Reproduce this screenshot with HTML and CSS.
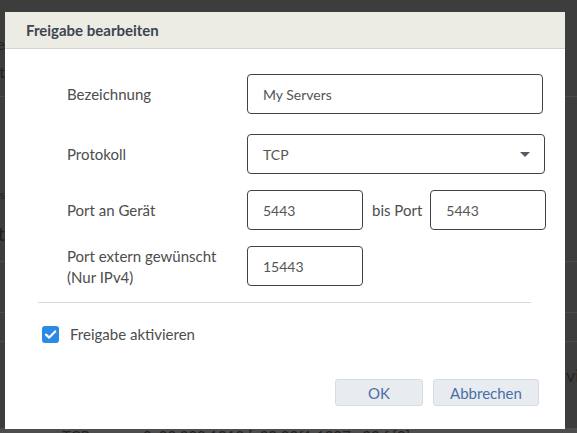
FILE: index.html
```html
<!DOCTYPE html>
<html lang="de">
<head>
<meta charset="utf-8">
<title>Freigabe bearbeiten</title>
<link rel="stylesheet" href="styles.css">
</head>
<body>
<div class="page">
  <div class="bg-row r1"><span class="bg-l t1">Liste</span><span class="bg-l t2">Endgerät</span></div>
  <div class="bg-row r2"><span class="bg-l t3">Adresses</span><span class="bg-l t4">Port</span></div>
  <div class="bg-row r3"></div>
  <div class="bg-row r4"></div>
  <div class="bg-row r5"><span class="bg-r">vi</span></div>
  <div class="bg-row r6"><span class="bg-b">TCP</span><span class="bg-b2">0..00.000.1010 [..00:00f1:1007 &nbsp; 00 f [0]</span></div>
</div>

<div class="dialog">
  <div class="dialog-header">Freigabe bearbeiten</div>
  <div class="dialog-body">
    <div class="form">
      <div class="row row-1">
        <label class="label">Bezeichnung</label>
        <div class="field wide">My Servers</div>
      </div>
      <div class="row row-2">
        <label class="label">Protokoll</label>
        <div class="field select">TCP<span class="caret"></span></div>
      </div>
      <div class="row row-3">
        <label class="label">Port an Gerät</label>
        <div class="field short">5443</div>
        <span class="bis">bis Port</span>
        <div class="field short">5443</div>
      </div>
      <div class="row row-4">
        <label class="label two">Port extern gewünscht<br>(Nur IPv4)</label>
        <div class="field short">15443</div>
      </div>
    </div>
    <div class="divider"></div>
    <div class="check-row">
      <span class="checkbox">
        <svg width="17" height="17" viewBox="0 0 17 17"><path d="M4 8.6 L7.2 11.6 L13.2 5.4" fill="none" stroke="#fff" stroke-width="2.2" stroke-linecap="round" stroke-linejoin="round"/></svg>
      </span>
      <span class="check-label">Freigabe aktivieren</span>
    </div>
    <div class="buttons">
      <button class="btn ok">OK</button>
      <button class="btn cancel">Abbrechen</button>
    </div>
  </div>
</div>
</body>
</html>
```

FILE: styles.css
```css
html, body {
  margin: 0;
  padding: 0;
}
body {
  width: 577px;
  height: 433px;
  overflow: hidden;
  background: #3d3d3d;
  font-family: "Lato", "Liberation Sans", sans-serif;
  position: relative;
}

/* page behind the modal */
.page {
  display: flex;
  flex-direction: column;
}
.bg-row {
  position: relative;
  border-bottom: 1px solid #4b4b4b;
  color: #222;
  font-size: 16px;
}
.r1 { height: 96px; }
.r2 { height: 164px; }
.r3 { height: 50px; }
.r4 { height: 28px; }
.r5 { height: 86px; border-bottom: none; }
.r6 { height: 10px; background: #4d4d4d; border-bottom: none; }
.bg-l { position: absolute; right: 572px; white-space: nowrap; }
.t1 { top: 34px; }
.t2 { top: 62px; }
.t3 { top: 90px; font-size: 12px; }
.t4 { top: 124px; font-size: 20px; }
.bg-r { position: absolute; left: 566px; top: 22px; font-size: 18px; white-space: nowrap; }
.bg-b { position: absolute; left: 62px; top: -1px; font-size: 15px; }
.bg-b2 { position: absolute; left: 143px; top: -1px; font-size: 15px; white-space: nowrap; }

/* dialog */
.dialog {
  position: absolute;
  left: 5px;
  top: 12px;
  width: 560px;
  height: 417px;
  background: #fff;
  display: flex;
  flex-direction: column;
}
.dialog-header {
  flex: none;
  height: 36px;
  background: #ecece5;
  border-bottom: 1px solid #d3d3d0;
  padding-left: 21px;
  display: flex;
  align-items: center;
  font-weight: bold;
  font-size: 15px;
  color: #3d4551;
}
.dialog-body {
  flex: 1;
  padding: 25px 34px 0 33px;
  display: flex;
  flex-direction: column;
}
.form {
  padding-left: 29px;
  display: flex;
  flex-direction: column;
}
.row {
  display: flex;
  align-items: center;
}
.row-2 { margin-top: 20px; }
.row-3 { margin-top: 16px; }
.row-4 { margin-top: 16px; align-items: flex-start; }
.label {
  width: 180px;
  flex: none;
  font-size: 15px;
  color: #4d4d4d;
  line-height: 21px;
}
.field {
  flex: none;
  box-sizing: border-box;
  height: 40px;
  border: 1px solid #3d434b;
  border-radius: 4px;
  padding-left: 15px;
  display: flex;
  align-items: center;
  font-size: 14px;
  color: #555;
  position: relative;
}
.wide { width: 296px; }
.select { width: 298px; }
.short { width: 116px; }
.caret {
  position: absolute;
  right: 14px;
  top: 17px;
  width: 0;
  height: 0;
  border-left: 5px solid transparent;
  border-right: 5px solid transparent;
  border-top: 5px solid #545c67;
}
.bis {
  flex: none;
  white-space: nowrap;
  font-size: 15px;
  color: #4d4d4d;
  margin: 0 8px 0 9px;
}
.divider {
  margin-top: 14px;
  height: 1px;
  background: #d8d8d8;
}
.check-row {
  margin-top: 22px;
  display: flex;
  align-items: center;
  padding-left: 4px;
}
.checkbox {
  flex: none;
  width: 17px;
  height: 17px;
  border-radius: 3px;
  background: #2b8ae5;
  display: flex;
}
.check-label {
  margin-left: 11px;
  font-size: 15px;
  color: #4d4d4d;
}
.buttons {
  margin-top: 36px;
  display: flex;
  justify-content: flex-end;
  gap: 10px;
  margin-right: -8px;
}
.btn {
  box-sizing: border-box;
  height: 27px;
  background: #e8ecf0;
  border: 1px solid #d5dce3;
  border-radius: 3px;
  font-family: "Lato", "Liberation Sans", sans-serif;
  font-size: 15px;
  color: #4a6fa8;
  padding: 0;
}
.ok { width: 88px; }
.cancel { width: 106px; }
```
